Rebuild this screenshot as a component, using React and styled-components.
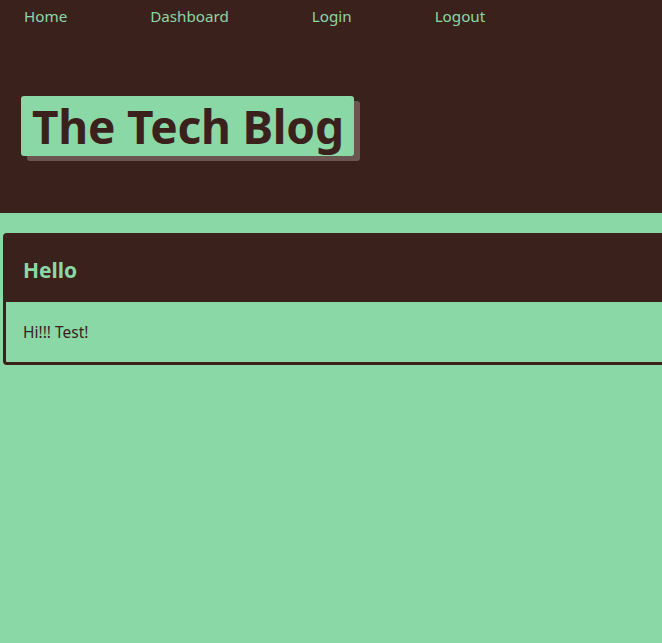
import React from "react";
import { styled, createGlobalStyle } from "styled-components";

const GlobalStyle = createGlobalStyle`
  html, body {
    margin: 0;
    padding: 0;
    background: #8bd8a7;
    overflow: hidden;
  }
  body {
    font-family: "Noto Sans", "Open Sans", sans-serif;
  }
`;

const Header = styled.header`
  background: #3b211c;
  height: 213px;
  box-sizing: border-box;
  padding: 6px 0 0 24px;
`;

const Nav = styled.nav`
  display: flex;
  gap: 83px;
`;

const NavLink = styled.a`
  color: #8bd8a7;
  font-size: 15.2px;
  line-height: 20px;
  text-decoration: none;
`;

const Title = styled.h1`
  display: inline-block;
  margin: 70px 0 0 -3px;
  padding: 0 10px 0 11px;
  height: 60px;
  line-height: 60px;
  background: #8bd8a7;
  color: #3b211c;
  font-size: 46px;
  letter-spacing: -0.2px;
  font-weight: 700;
  border-radius: 3px;
  box-shadow: 6px 5px 0 #6b5550;
`;

const Main = styled.main`
  padding: 20px 0 0 3px;
  margin-right: -20px;
`;

const Card = styled.article`
  border: 3px solid #3b211c;
  border-radius: 4px;
  overflow: hidden;
`;

const CardHeader = styled.div`
  background: #3b211c;
  height: 66px;
  box-sizing: border-box;
  padding: 0 0 0 17px;
  display: flex;
  align-items: center;
`;

const CardTitle = styled.h2`
  margin: 2px 0 0;
  color: #8bd8a7;
  font-size: 21px;
  font-weight: 700;
`;

const CardBody = styled.div`
  height: 60px;
  box-sizing: border-box;
  padding: 0 0 0 17px;
  display: flex;
  align-items: center;
  color: #3b211c;
  font-size: 15.5px;
`;

export default function App() {
  return (
    <>
      <GlobalStyle />
      <Header>
        <Nav>
          <NavLink href="#">Home</NavLink>
          <NavLink href="#">Dashboard</NavLink>
          <NavLink href="#">Login</NavLink>
          <NavLink href="#">Logout</NavLink>
        </Nav>
        <Title>The Tech Blog</Title>
      </Header>
      <Main>
        <Card>
          <CardHeader>
            <CardTitle>Hello</CardTitle>
          </CardHeader>
          <CardBody>Hi!!! Test!</CardBody>
        </Card>
      </Main>
    </>
  );
}
